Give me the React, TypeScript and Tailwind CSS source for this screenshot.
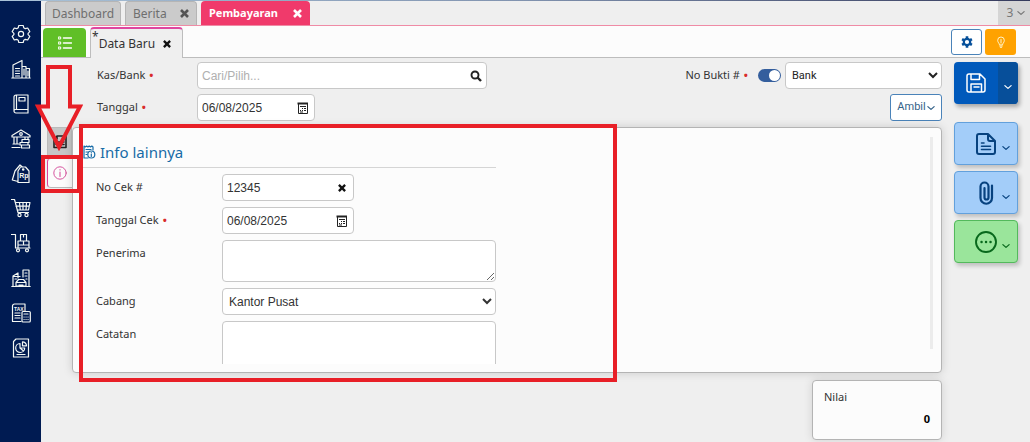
import React from "react";

type IconProps = { className?: string };

function Svg({ children, className = "size-5", viewBox = "0 0 20 20" }: IconProps & { children: React.ReactNode; viewBox?: string }) {
  return (
    <svg
      aria-hidden="true"
      viewBox={viewBox}
      className={className}
      fill="none"
      stroke="currentColor"
      strokeWidth="1.2"
      strokeLinejoin="round"
      strokeLinecap="round"
    >
      {children}
    </svg>
  );
}

const CogOutline = () => (
  <Svg>
    <path d="M7.800 1.500h4.400l.6 2.300 1.500.9 2.400-.7 2.100 3.600-1.700 1.700v1.400l1.700 1.700-2.100 3.600-2.400-.7-1.500.9-.6 2.300H7.800l-.6-2.300-1.500-.9-2.400.7-2.100-3.600 1.700-1.700V9.300L1.200 7.600 3.300 4l2.400.7 1.500-.9z" />
    <circle cx="10" cy="10" r="2.600" />
  </Svg>
);

const Buildings = () => (
  <Svg>
    <path d="M.8 19h18.400M2 19V6l9-4.500V19M11 7.500h4V19M15 9.500h3.500V19" />
    <path d="M4.500 9.500H8.500M4.500 12H8.500M4.500 14.500H8.500M4.500 17H8.500M13 10v6M17 12v5" />
  </Svg>
);

const Book = () => (
  <Svg>
    <path d="M5 1h12v18H5a2 2 0 0 1-2-2V3a2 2 0 0 1 2-2zM5.500 1v14.500M17 15.500H4.500a1.500 1.500 0 0 0-1.500 1.500" />
    <rect x="8" y="3.500" width="6" height="3.500" />
  </Svg>
);

const Bank = () => (
  <Svg>
    <path d="M1 6.500 10 1l9 5.500v1.500H1zM3 8v7M6 8v7M2 15h6M1 18.500h8M14 8v2M17 8v2" />
    <circle cx="10" cy="5" r="1.300" />
    <path d="M11 10.500h7v3h-7zM9 13.500h8v2.500H9zM10.500 16h8v3h-8z" />
  </Svg>
);

const PriceTag = () => (
  <Svg>
    <path d="M7 7 9.500 3h5L18 7v11.500H7zM7 17.500 1.300 16 4 7l5-6 2.500 2" />
    <circle cx="12.200" cy="5.500" r=".7" />
    <text x="8.300" y="14" fontSize="7" fontWeight="700" fontFamily="Liberation Sans, sans-serif" fill="currentColor" stroke="none">Rp</text>
  </Svg>
);

const Cart = () => (
  <Svg>
    <path d="M.5 1.500h3L7 14.500h10.500M4.300 4.500H19l-1.500 7.500H6.200M8.500 4.500l.8 7.500M12 4.500V12M15.500 4.500 15 12M5 8.200h13" />
    <circle cx="8.500" cy="17" r="1.600" />
    <circle cx="15.500" cy="17" r="1.600" />
  </Svg>
);

const Trolley = () => (
  <Svg>
    <path d="M.5 1.500h4V15H19M7 8h11v7H7zM9.500 1.500h6V8h-6zM12.500 1.500V4M12.500 8v3M7 12h11" />
    <circle cx="7" cy="17.300" r="1.500" />
    <circle cx="16" cy="17.300" r="1.500" />
  </Svg>
);

const Assets = () => (
  <Svg>
    <path d="M.8 18.500h18.400M2 18.500V8l5-3v5M2 8.500h7M12 9V2h6v16.500M14 5h2M14 8h2M15 11h1M4 11h1.500" />
    <path d="M5 18v-3.500l2.500-3h5l2.500 3V18zM5.500 14.500h9M8 17h4" />
  </Svg>
);

const Tax = () => (
  <Svg>
    <path d="M10 18.500H1.500V3a2 2 0 0 1 2-2H14v6.500M4 10h5M4 12.500h5M4 15h5" />
    <text x="3" y="7.500" fontSize="5" fontWeight="700" fontFamily="Liberation Sans, sans-serif" fill="currentColor" stroke="none">TAX</text>
    <rect x="11" y="8.500" width="8.300" height="10.500" rx="1" />
    <path d="M13 11h4M13 14h.1M15 14h.1M17 14h.1M13 16.500h.1M15 16.500h.1M17 16.500h.1" />
  </Svg>
);

const Report = () => (
  <Svg>
    <path d="M5 1h12.500v18H2.500V3.500zM6 16.500h8" />
    <path d="M9 5.500a4.500 4.500 0 1 0 4.700 4.500H9zM11.500 3.800v4h4a4 4 0 0 0-4-4zM9 10l3.500 3" />
  </Svg>
);

const Calendar = () => (
  <svg aria-hidden="true" viewBox="0 0 11 12" className="h-3 w-[11px] text-[#222]" fill="none" stroke="currentColor">
    <path d="M1.500 2v9.500H10.500V2" />
    <path d="M.5 1.500h10.500" strokeWidth="2" />
    <path d="M3 4.500h6M5 6.500h1M7 6.500h2M3 8.500h1M5 8.500h1M7 8.500h2M3 10h3" />
  </svg>
);

const Cross = ({ className = "size-[9px]" }: IconProps) => (
  <svg aria-hidden="true" viewBox="0 0 9 9" className={className} stroke="currentColor" strokeWidth="2.600">
    <path d="M1 1l7 7M8 1 1 8" />
  </svg>
);

const Chevron = ({ className = "w-2 h-1" }: IconProps) => (
  <svg aria-hidden="true" viewBox="0 0 8 4" className={className} fill="none" stroke="currentColor" strokeWidth="1.100">
    <path d="M.5.300 4 3.400 7.500.300" />
  </svg>
);

const FloppyIcon = () => (
  <Svg className="size-5">
    <path strokeWidth="1.500" d="M3 1h11l5 5v11a2 2 0 0 1-2 2H3a2 2 0 0 1-2-2V3a2 2 0 0 1 2-2zM5 1v5.500h8.500V1M5 19v-8h10.500v8M8 14h5" />
  </Svg>
);

const DocIcon = () => (
  <Svg className="size-6" viewBox="0 0 24 24">
    <path strokeWidth="2" d="M5 2h9l7 7v11a2 2 0 0 1-2 2H5a2 2 0 0 1-2-2V4a2 2 0 0 1 2-2zM14 2v5a2 2 0 0 0 2 2h5" />
    <path strokeWidth="1.600" d="M7.500 11H10M7.500 14.300h9M7.500 17.500h9" />
  </Svg>
);

const ClipIcon = () => (
  <Svg className="size-6" viewBox="0 0 24 24">
    <path strokeWidth="2.200" d="M18 4.500V17a5.500 5.500 0 0 1-11.500 0V5.500a4 4 0 0 1 8 0v11a2 2 0 0 1-4 0V7" />
  </Svg>
);

const MoreIcon = () => (
  <Svg className="size-6" viewBox="0 0 24 24">
    <circle cx="12" cy="12" r="10" strokeWidth="1.900" />
    <path strokeWidth="2.400" d="M7.500 12h.1M12 12h.1M16.500 12h.1" />
  </Svg>
);

const menu = [
  { name: "Pengaturan", icon: CogOutline },
  { name: "Perusahaan", icon: Buildings },
  { name: "Buku Besar", icon: Book },
  { name: "Kas & Bank", icon: Bank },
  { name: "Penjualan", icon: PriceTag },
  { name: "Pembelian", icon: Cart },
  { name: "Persediaan", icon: Trolley },
  { name: "Aset Tetap", icon: Assets },
  { name: "Pajak", icon: Tax },
  { name: "Laporan", icon: Report },
];

const Required = () => <span className="ml-1 font-bold text-[#d92b2b]">•</span>;

const field = "rounded border border-[#c8c8c8] bg-white font-['Liberation_Sans',Arial,sans-serif] text-xs text-[#333]";

function DateField({ id, width }: { id: string; width: string }) {
  return (
    <div className={`flex h-[27px] items-center justify-between pr-[6px] pl-1 ${width} ${field}`}>
      <input id={id} defaultValue="06/08/2025" className="w-20 bg-transparent outline-none" />
      <button type="button" aria-label="Pilih tanggal"><Calendar /></button>
    </div>
  );
}

function ActionButton({ label, tone, children }: { label: string; tone: string; children: React.ReactNode }) {
  return (
    <button type="button" aria-label={label} className={`flex h-[43px] items-center justify-end gap-1 rounded border pr-[7px] shadow-[2px_3px_4px_rgba(0,0,0,0.2)] ${tone}`}>
      {children}
      <Chevron className="mt-2 h-1 w-2" />
    </button>
  );
}

export default function App() {
  return (
    <div className="relative flex min-h-screen flex-col overflow-hidden bg-[#efefef] font-['Noto_Sans','Open_Sans',sans-serif] text-[11px] text-[#333]">
      <div className="h-px bg-linear-to-r from-[#a9c3d9] via-[#8294b0] to-[#353a5c]" />
      <div className="flex flex-1">
        <nav aria-label="Menu utama" className="w-[41px] shrink-0 bg-[#001b52] pt-4 text-[#f4f8f4]">
          <ul className="grid h-[348px] grid-rows-10">
            {menu.map(({ name, icon: Icon }) => (
              <li key={name} className="grid place-items-center">
                <a href="#" aria-label={name}><Icon /></a>
              </li>
            ))}
          </ul>
        </nav>

        <div className="flex min-w-0 flex-1 flex-col">
          <header className="flex h-[25px] items-stretch gap-1 border-b border-[#ef8ba5] pl-1 text-xs text-[#6f6f6f]">
            <button type="button" className="w-[76px] rounded-t border border-b-0 border-[#b5b5b5] bg-[#cbcbcb]">Dashboard</button>
            <div className="flex w-[72px] items-center justify-between rounded-t border border-b-0 border-[#b5b5b5] bg-[#cbcbcb] px-[7px]">
              <button type="button">Berita</button>
              <button type="button" aria-label="Tutup Berita" className="text-[#555]"><Cross /></button>
            </div>
            <div className="flex w-[109px] items-center justify-between rounded-t bg-[#f03a6b] px-2 text-[11px] font-bold text-white">
              <button type="button">Pembayaran</button>
              <button type="button" aria-label="Tutup Pembayaran"><Cross /></button>
            </div>
            <button type="button" className="ml-auto flex w-8 items-center justify-center gap-1 bg-[#d5d5d5] pl-1 text-[#777]">
              3 <Chevron />
            </button>
          </header>

          <div className="flex h-8 border-b border-[#bdbdbd] bg-[#fcfcfc] pr-[14px] pl-[2px]">
            <button type="button" aria-label="Daftar" className="mt-[2px] grid w-[43px] place-items-center rounded-t bg-[#60bf27] text-white">
              <Svg className="h-[14px] w-[14px]" viewBox="0 0 14 14">
                <path d="M5.500 2h8M5.500 7h8M5.500 12h8" strokeWidth="1.500" />
                <path d="M.7 1h2v2h-2zM.7 6h2v2h-2zM.7 11h2v2h-2z" strokeWidth="1" />
              </Svg>
            </button>
            <div className="-mb-px ml-1 mt-px flex w-[93px] items-center rounded-t border border-t-2 border-b-0 border-[#bdbdbd] border-t-[#de46a0] bg-[#efefef] pl-px text-xs">
              <span className="self-start leading-4">*</span>
              <button type="button">Data Baru</button>
              <button type="button" aria-label="Tutup Data Baru" className="ml-2 text-[#111]"><Cross className="size-2" /></button>
            </div>
            <div className="ml-auto flex items-center gap-[3px]">
              <button type="button" aria-label="Pengaturan" className="grid h-[26px] w-[31px] place-items-center rounded-[3px] border border-[#4a83b9] bg-white text-[#06509a]">
                <svg aria-hidden="true" viewBox="0 0 12 12" className="size-3" fill="none" stroke="currentColor">
                  <circle cx="6" cy="6" r="3.200" strokeWidth="2.200" />
                  <path d="M6 .3v2M6 9.700v2M1.100 3.200l1.700 1M9.200 7.800l1.700 1M1.100 8.800l1.700-1M9.200 4.200l1.700-1" strokeWidth="2.600" />
                </svg>
              </button>
              <button type="button" aria-label="Bantuan" className="grid h-[26px] w-[31px] place-items-center rounded-[3px] bg-[#ffa200] text-[#fff3c8]">
                <Svg className="size-3" viewBox="0 0 12 12">
                  <path d="M4.500 8.500C4.500 7.300 2.700 6.700 2.700 4.300a3.300 3.300 0 0 1 6.600 0c0 2.400-1.800 3-1.800 4.200zM4.700 10h2.600M5.300 11.300h1.400M6 3.500v3.500" strokeWidth="1" />
                </Svg>
              </button>
            </div>
          </div>

          <div className="flex flex-1 gap-3 pt-1 pr-3">
            <main className="flex min-w-0 flex-1 flex-col">
              <div className="grid grid-cols-[100px_1fr] items-center gap-y-[5px] pl-[56px]">
                <label htmlFor="kas">Kas/Bank<Required /></label>
                <div className="flex items-center justify-between">
                  <div className={`flex h-[27px] w-[290px] items-center justify-between pr-1 pl-1 ${field}`}>
                    <input id="kas" placeholder="Cari/Pilih..." className="w-60 bg-transparent outline-none placeholder:text-[#b0b0b0]" />
                    <button type="button" aria-label="Cari">
                      <svg aria-hidden="true" viewBox="0 0 12 12" className="size-3 text-[#222]" fill="none" stroke="currentColor" strokeWidth="1.900">
                        <circle cx="5" cy="5" r="3.500" />
                        <path d="M7.500 7.500 11 11" strokeWidth="2.400" />
                      </svg>
                    </button>
                  </div>
                  <div className="flex items-center">
                    <label htmlFor="bukti">No Bukti #<Required /></label>
                    <label className="relative ml-[10px] flex">
                      <input type="checkbox" defaultChecked aria-label="No Bukti otomatis" className="h-[13px] w-[23px] appearance-none rounded-full bg-[#345e9d]" />
                      <span className="absolute top-px right-px size-[11px] rounded-full bg-white" />
                    </label>
                    <select id="bukti" className="ml-1 h-[27px] w-[157px] rounded border border-[#c8c8c8] bg-white px-[2px] font-[Roboto,sans-serif] text-[11px] text-[#222]">
                      <option>Bank</option>
                    </select>
                  </div>
                </div>
                <label htmlFor="tanggal">Tanggal<Required /></label>
                <div className="flex items-center justify-between">
                  <DateField id="tanggal" width="w-[118px]" />
                  <button type="button" className="flex h-[27px] w-[52px] items-center justify-center gap-px rounded-[3px] border border-[#4a83b9] bg-white font-[Roboto,sans-serif] text-[11px] text-[#336289]">
                    Ambil <Chevron />
                  </button>
                </div>
              </div>

              <div className="mt-[6px] flex">
                <div className="flex w-[31px] shrink-0 flex-col pl-[6px]">
                  <button type="button" aria-label="Rincian" className="grid h-[30px] place-items-center border border-[#bbb] bg-[#c6c6c6] text-[#222]">
                    <Svg className="size-[14px]" viewBox="0 0 14 14">
                      <path d="M1 12.500V4l3-3h9v11.500zM4 1v3H1M3 7h8M3 9.500h8" strokeWidth="1.600" />
                    </Svg>
                  </button>
                  <button type="button" aria-label="Info lainnya" className="mt-px grid h-[30px] place-items-center rounded-l border border-r-0 border-[#bbb] border-l-[#d8459b] bg-[#fcfcfc] text-[#d6559f]">
                    <Svg className="size-[14px]" viewBox="0 0 14 14">
                      <circle cx="7" cy="7" r="6.200" strokeWidth="1" />
                      <path d="M7 6v4.500M7 3.500v.4" strokeWidth="1.100" />
                    </Svg>
                  </button>
                </div>
                <section className="flex min-w-0 flex-1 justify-between rounded border border-[#b4b4b4] bg-[#fcfcfc] pt-2 pr-2 pb-2 shadow-[0_0_10px_rgba(0,0,0,0.15)]">
                  <div className="h-[228px] w-[423px] overflow-hidden">
                    <h2 className="ml-[9px] flex h-8 items-center gap-1 border-b border-[#d5d5d5] pt-px text-[15px] text-[#176ba6]">
                      <Svg className="size-[14px]" viewBox="0 0 14 14">
                        <path d="M6 13H2V1l1.300 1L4.600 1l1.300 1L7.200 1l1.300 1L9.800 1 11 2v3M4 4.500h5M4 7h2M4 9.500h1" />
                        <circle cx="9.300" cy="9.500" r="3.500" />
                        <path d="M9.300 9v2.500M9.300 7.500v.1" />
                      </Svg>
                      Info lainnya
                    </h2>
                    <div className="mt-[6px] grid grid-cols-[126px_1fr] gap-y-[6px] pl-[23px]">
                      <label htmlFor="cek" className="leading-[26px]">No Cek #</label>
                      <div className={`flex h-[27px] w-[132px] items-center justify-between pr-[7px] pl-1 ${field}`}>
                        <input id="cek" defaultValue="12345" className="w-20 bg-transparent outline-none" />
                        <button type="button" aria-label="Hapus" className="text-[#111]"><Cross className="size-2" /></button>
                      </div>
                      <label htmlFor="tglcek" className="leading-[26px]">Tanggal Cek<Required /></label>
                      <DateField id="tglcek" width="w-[132px]" />
                      <label htmlFor="penerima" className="leading-[26px]">Penerima</label>
                      <textarea id="penerima" className={`block h-[42px] w-full p-1 ${field}`} />
                      <label htmlFor="cabang" className="leading-[26px]">Cabang</label>
                      <select id="cabang" className={`h-[27px] w-full px-[2px] ${field}`}>
                        <option>Kantor Pusat</option>
                      </select>
                      <label htmlFor="catatan" className="leading-[26px]">Catatan</label>
                      <textarea id="catatan" className={`block h-[60px] w-full p-1 ${field}`} />
                    </div>
                  </div>
                  <div className="mt-px h-[212px] w-[3px] bg-[#ececec]" />
                </section>
              </div>

              <section className="mt-[7px] ml-auto flex h-[60px] w-[130px] flex-col justify-between rounded border border-[#b4b4b4] bg-[#fcfcfc] px-[11px] pt-2 pb-3 shadow-[0_0_10px_rgba(0,0,0,0.12)]">
                <span>Nilai</span>
                <strong className="text-right text-black">0</strong>
              </section>
            </main>

            <aside className="flex w-[64px] shrink-0 flex-col gap-[6px]">
              <div className="mb-3 flex h-[42px] overflow-hidden rounded bg-[#0059bb] text-white shadow-[2px_3px_4px_rgba(0,0,0,0.3)]">
                <button type="button" aria-label="Simpan" className="grid w-[44px] place-items-center"><FloppyIcon /></button>
                <button type="button" aria-label="Opsi simpan" className="grid flex-1 place-items-center bg-[#074f9a] pt-2"><Chevron /></button>
              </div>
              <ActionButton label="Dokumen" tone="border-[#62a0dc] bg-[#a3cdf9] text-[#07427f]"><DocIcon /></ActionButton>
              <ActionButton label="Lampiran" tone="border-[#62a0dc] bg-[#a3cdf9] text-[#07427f]"><ClipIcon /></ActionButton>
              <ActionButton label="Lainnya" tone="border-[#53b95c] bg-[#9ae59b] text-[#08681c]"><MoreIcon /></ActionButton>
            </aside>
          </div>
        </div>
      </div>

      <div className="pointer-events-none absolute top-[124px] left-[79px] h-[258px] w-[538px] border-4 border-[#e81f27]" />
      <div className="pointer-events-none absolute top-[155px] left-[41px] h-[38px] w-10 border-4 border-[#e81f27]" />
      <svg aria-hidden="true" viewBox="0 0 48 88" className="pointer-events-none absolute top-[63px] left-[35px] h-[88px] w-12" fill="none" stroke="#e81f27" strokeWidth="4">
        <path d="M13 4H35V43.500H45L24 84 3 43.500H13z" />
      </svg>
    </div>
  );
}
